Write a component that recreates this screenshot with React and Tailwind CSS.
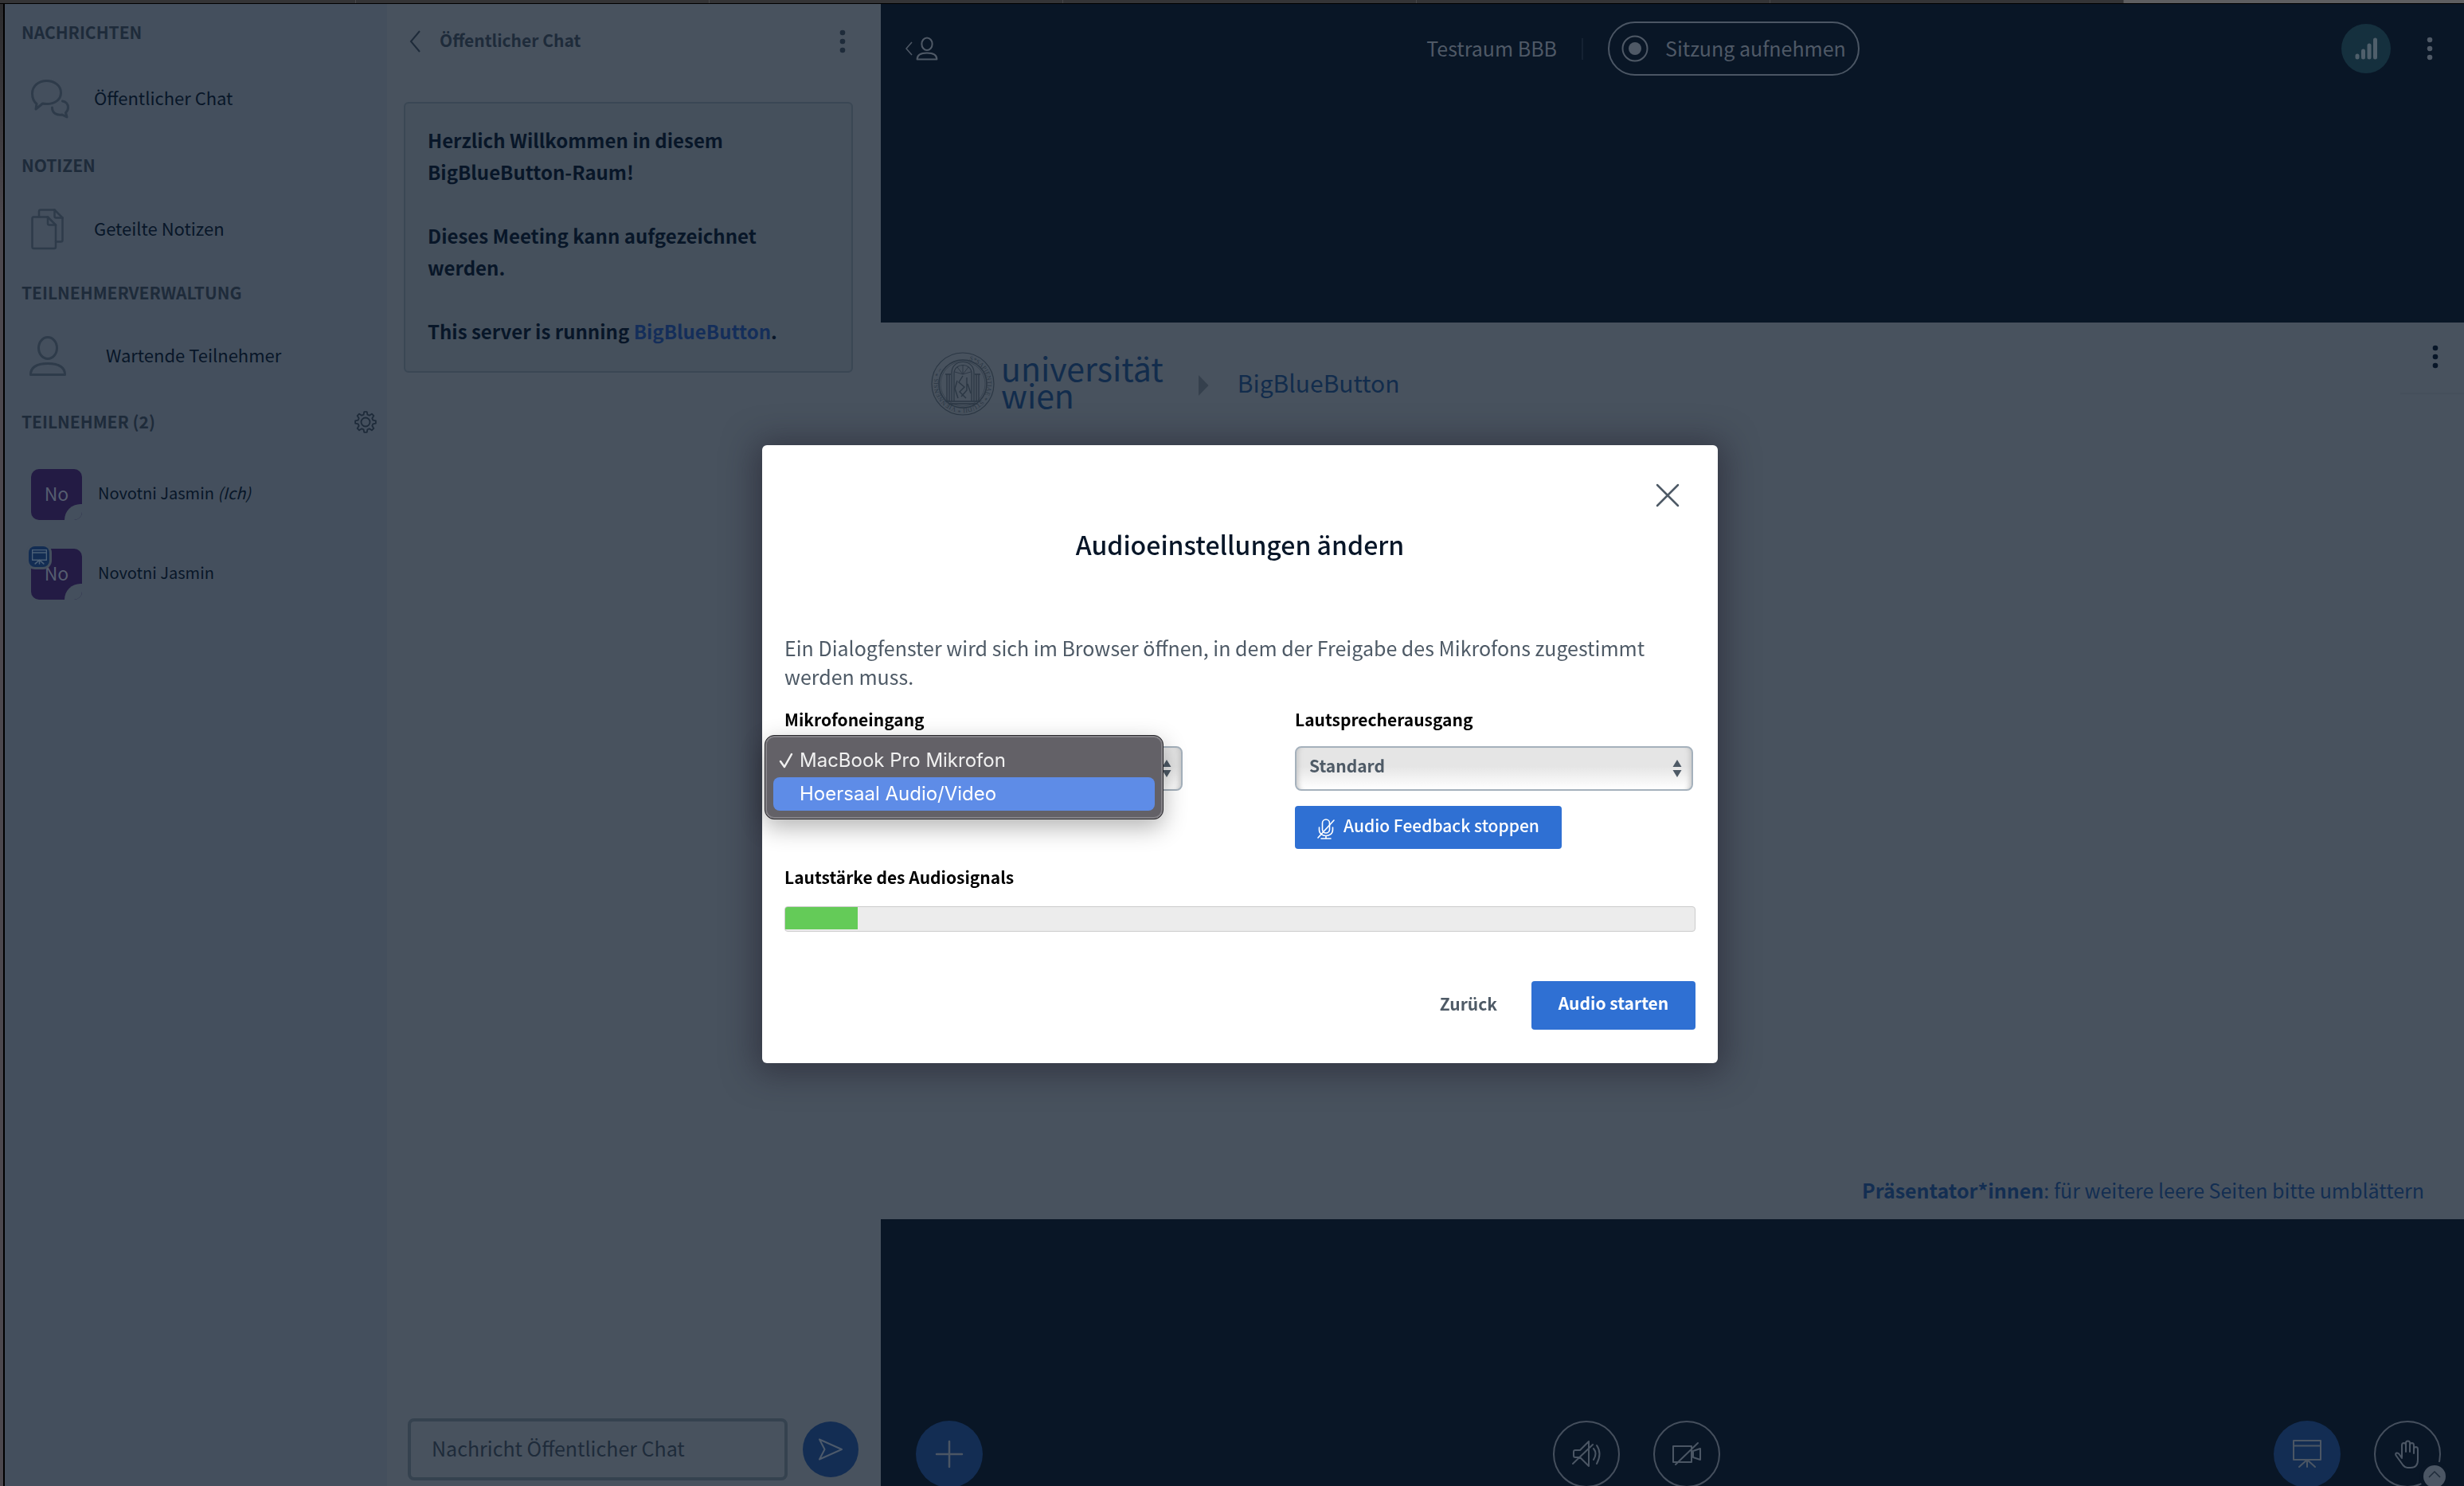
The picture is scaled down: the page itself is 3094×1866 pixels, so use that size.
import { useState } from "react";

const Chats = () => (
  <svg className="w-[52px] h-[52px]" viewBox="0 0 52 52" fill="none" stroke="currentColor" strokeWidth="3" strokeLinejoin="round" strokeLinecap="round">
    <path d="M8 32.500C4.500 29.500 2.500 25 2.500 19.500C2.500 10 10.500 3.500 20.500 3.500S38.500 9.500 38.500 18.500S30.500 32.500 20.500 32.500C18.500 32.500 17 32.500 15.500 32L7 39Z" />
    <path d="M40.500 29C45 29.500 47.500 33 47.500 37C47.500 39.500 46.500 41.500 44.500 43.500L46 49L40 46C33 47 27.500 44 27.500 37" />
  </svg>
);

const Notes = () => (
  <svg className="w-[44px] h-[52px]" viewBox="0 0 44 52" fill="none" stroke="currentColor" strokeWidth="2.5" strokeLinejoin="round" strokeLinecap="round">
    <path d="M3.500 10.500H22L32 20.500V48Q32 50 30 50H4.500Q2.500 50 2.500 48V12.500Q2.500 10.500 4.500 10.500" />
    <path d="M22 10.500V18.500Q22 20.500 24 20.500H32" />
    <path d="M11 10V3.500Q11 1.500 13 1.500H30.500L40.500 11.500V39.500Q40.500 41.500 38.500 41.500H32" />
    <path d="M30.500 1.500V9.500Q30.500 11.500 32.500 11.500H40.500" />
  </svg>
);

const Person = ({ className, strokeWidth = 3 }) => (
  <svg className={className} viewBox="0 0 50 52" fill="none" stroke="currentColor" strokeWidth={strokeWidth} strokeLinejoin="round">
    <ellipse cx="25" cy="16" rx="11.500" ry="13.500" />
    <path d="M3.500 49.500C3.500 40 11 35.500 25 35.500S46.500 40 46.500 49.500Z" />
  </svg>
);

const gearPath = () => {
  const points = [];
  for (let i = 0; i < 32; i++) {
    const step = i % 4;
    const r = step === 0 || step === 1 ? 13 : 9.6;
    const a = (Math.PI / 4) * (Math.floor(i / 4) + [-0.17, 0.17, 0.33, 0.67][step]) - Math.PI / 2;
    points.push([15 + r * Math.cos(a), 15 + r * Math.sin(a)]);
  }
  return "M" + points.map((p) => p.map((n) => n.toFixed(2)).join(" ")).join("L") + "Z";
};

const Gear = () => (
  <svg className="w-[30px] h-[30px]" viewBox="0 0 30 30" fill="none" stroke="currentColor" strokeWidth="1.8" strokeLinejoin="round">
    <path d={gearPath()} />
    <circle cx="15" cy="15" r="5.500" />
  </svg>
);

const Dots = () => (
  <svg className="w-[10px] h-[30px]" viewBox="0 0 10 30" fill="currentColor">
    <circle cx="5" cy="4" r="3.300" />
    <circle cx="5" cy="15" r="3.300" />
    <circle cx="5" cy="26" r="3.300" />
  </svg>
);

const Screen = ({ className, strokeWidth = 2 }) => (
  <svg className={className} viewBox="0 0 36 36" fill="none" stroke="currentColor" strokeWidth={strokeWidth} strokeLinecap="round" strokeLinejoin="round">
    <path d="M1 1H35V25H1ZM1 7.500H35M18 25V34M18 25L8 34M18 25L28 34" />
  </svg>
);

const Seal = () => (
  <svg className="w-[80px] h-[80px]" viewBox="0 0 80 80" fill="none" stroke="#2b3744">
    <defs>
      <path id="ring" d="M40 9a31 31 0 1 1 -0.010 0" />
    </defs>
    <circle cx="40" cy="40" r="39" strokeWidth="1.200" />
    <circle cx="40" cy="40" r="30" strokeWidth="1.500" />
    <circle cx="40" cy="40" r="28" strokeWidth="0.600" />
    <text fill="#2b3744" stroke="none" fontSize="8" className="font-['Liberation_Serif',serif]">
      <textPath href="#ring" startOffset="8">S*SAPIENTIAE * STUDII * VIENNENSIS * ~</textPath>
    </text>
    <path d="M26 62V26C26 8 54 8 54 26V62M29 62V27C29 13 51 13 51 27V62" strokeWidth="1.200" />
    <path d="M20 62V28M23 62V28M57 62V28M60 62V28M18 28H25M55 28H62M18 62H62M22 65H58" strokeWidth="1.300" />
    <path d="M40 28V17M40 28L33 19M40 28L47 19M40 28L30 25M40 28L50 25" strokeWidth="0.900" />
    <path d="M40 30L35 38L42 44L36 50L44 58M45 32V48L38 56M33 36L30 46L34 58M46 40L50 52" strokeWidth="1.400" />
  </svg>
);

const Heading = ({ children }) => (
  <h2 className="h-[30px] leading-[28px] text-[21px] font-bold text-[#1e2b3a]">{children}</h2>
);

const Avatar = ({ presenter }) => (
  <div className="relative w-[64px] h-[64px]">
    <div className="relative w-full h-full rounded-[10px] overflow-hidden bg-[#231b44] flex items-center justify-center text-[23px] leading-[28px] text-[#565e70]">
      <span className="pb-1">No</span>
      <span className="absolute -right-[18px] -bottom-5 w-10 h-10 rounded-full bg-[#444f5d]" />
    </div>
    {presenter && (
      <div className="absolute -left-[3px] -top-[3px] w-[26px] h-[26px] rounded-lg bg-[#132d53] ring-3 ring-[#444f5d] flex items-center justify-center text-[#4c6077]">
        <Screen className="w-[19px] h-[19px]" strokeWidth={3} />
      </div>
    )}
  </div>
);

const UserList = () => (
  <nav className="w-[480px] shrink-0 bg-[#444f5d] pt-[21px] pl-[21px] text-[22px] text-[#081628]">
    <Heading>NACHRICHTEN</Heading>
    <button className="flex items-center h-[80px] mt-7 mb-[29px] pl-[11px] w-full">
      <span className="w-[80px] text-[#2e3b4a]"><Chats /></span>
      <span className="leading-[32px] pb-1">Öffentlicher Chat</span>
    </button>
    <Heading>NOTIZEN</Heading>
    <button className="flex items-center h-[80px] mt-[25px] mb-[25px] pl-[11px] w-full">
      <span className="w-[80px] text-[#2e3b4a]"><Notes /></span>
      <span className="leading-[32px] pb-1">Geteilte Notizen</span>
    </button>
    <Heading>TEILNEHMERVERWALTUNG</Heading>
    <button className="flex items-center h-[80px] mt-6 mb-7 pl-2 w-full">
      <span className="w-[98px] text-[#2e3b4a]"><Person className="w-[50px] h-[52px]" /></span>
      <span className="leading-[32px] pb-1">Wartende Teilnehmer</span>
    </button>
    <div className="flex items-center justify-between pr-3">
      <Heading>TEILNEHMER (2)</Heading>
      <button aria-label="Teilnehmer verwalten" className="text-[#1e2b3a]"><Gear /></button>
    </div>
    <ul className="pt-[26px] text-[20px]">
      <li className="flex items-center gap-5 h-[100px] pl-[12px]">
        <Avatar />
        <span className="leading-[30px] pb-1">Novotni Jasmin <i>(Ich)</i></span>
      </li>
      <li className="flex items-center gap-5 h-[100px] pl-[12px]">
        <Avatar presenter />
        <span className="leading-[30px] pb-1">Novotni Jasmin</span>
      </li>
    </ul>
  </nav>
);

const ChatPanel = () => {
  const [message, setMessage] = useState("");

  return (
    <section className="w-[620px] shrink-0 bg-[#48525e] flex flex-col text-[#1e2b3a]">
      <header className="flex items-center justify-between pl-[28px] pr-[43px] h-[94px]">
        <button className="flex items-center gap-6 text-[21px] font-bold">
          <svg className="w-[14px] h-[28px]" viewBox="0 0 14 28" fill="none" stroke="currentColor" strokeWidth="2">
            <path d="M13 1L2 14L13 27" />
          </svg>
          <span className="leading-[32px] pb-1">Öffentlicher Chat</span>
        </button>
        <button aria-label="Chat-Optionen"><Dots /></button>
      </header>
      <div className="mt-[29px] ml-[21px] mr-[35px] border-2 border-[#3a4754] rounded-md bg-[#45505c] px-[28px] pt-[26px] pb-[30px] text-[24px] leading-[40px] font-bold text-[#081628]">
        <p>Herzlich Willkommen in diesem BigBlueButton-Raum!</p>
        <br />
        <p>Dieses Meeting kann aufgezeichnet werden.</p>
        <br />
        <p>This server is running <a href="#bbb" className="text-[#142e5a]">BigBlueButton</a>.</p>
      </div>
      <form className="mt-auto mb-[7px] ml-[26px] mr-7 flex items-center gap-[19px]" onSubmit={(e) => e.preventDefault()}>
        <input
          type="text"
          aria-label="Nachricht"
          placeholder="Nachricht Öffentlicher Chat"
          value={message}
          onChange={(e) => setMessage(e.target.value)}
          className="flex-1 min-w-0 h-[78px] border-4 border-[#35424f] rounded-lg px-[26px] pb-1 text-[25px] placeholder:text-[#1e2b3a] focus:outline-none"
        />
        <button aria-label="Senden" className="w-[70px] h-[70px] rounded-full bg-[#132d53] text-[#4d5a6b] flex items-center justify-center">
          <svg className="w-[32px] h-[28px]" viewBox="0 0 32 28" fill="none" stroke="currentColor" strokeWidth="2" strokeLinejoin="round">
            <path d="M2 1.500L30 14L2 26.500L8.500 14Z" />
          </svg>
        </button>
      </form>
    </section>
  );
};

const roundButton = "w-[84px] h-[84px] rounded-full flex items-center justify-center";

const Actions = () => (
  <footer className="h-[337px] -mb-0.5 shrink-0 flex items-end justify-between pl-[44px] pr-[29px] text-[#4b5664]">
    <button aria-label="Aktionen" className={roundButton + " bg-[#132d53]"}>
      <svg className="w-[36px] h-[36px]" viewBox="0 0 36 36" stroke="currentColor" strokeWidth="2.500" strokeLinecap="round">
        <path d="M18 2V34M2 18H34" />
      </svg>
    </button>
    <div className="flex gap-[42px] pl-5">
      <button aria-label="Audio" className={roundButton + " border-2 border-[#454f5d]"}>
        <svg className="w-[36px] h-[36px]" viewBox="0 0 36 36" fill="none" stroke="currentColor" strokeWidth="2" strokeLinecap="round" strokeLinejoin="round">
          <path d="M21 2V33L10 22H4Q2 22 2 20V15Q2 13 4 13H10ZM1 30L26 6M27 11Q32 17 27 25M31 7Q38 17 31 30" />
        </svg>
      </button>
      <button aria-label="Webcam" className={roundButton + " border-2 border-[#454f5d]"}>
        <svg className="w-[36px] h-[36px]" viewBox="0 0 36 36" fill="none" stroke="currentColor" strokeWidth="2" strokeLinecap="round" strokeLinejoin="round">
          <path d="M1 8H24V28H1ZM26 14L35 11V25L26 22ZM4 31L32 4" />
        </svg>
      </button>
    </div>
    <div className="flex gap-[42px]">
      <button aria-label="Präsentation" className={roundButton + " bg-[#132d53]"}>
        <Screen className="w-[36px] h-[36px]" />
      </button>
      <div className="relative">
        <button aria-label="Hand heben" className={roundButton + " border-2 border-[#454f5d]"}>
          <svg className="w-[36px] h-[36px]" viewBox="0 0 36 36" fill="none" stroke="currentColor" strokeWidth="2" strokeLinecap="round" strokeLinejoin="round">
            <path d="M11 22V7Q11 4 13.500 4T16 7V15V4Q16 1.500 18.500 1.500T21 4V15V7Q21 4 23.500 4T26 7V17V12Q26 9 28.500 9T31 12V25Q31 35 22 35H18Q15 35 12.500 32L3.500 19.500Q2.500 17 4.500 16.500T8 18.500L11 23" />
          </svg>
        </button>
        <button aria-label="Reaktionen" className="absolute -right-1.5 bottom-0 w-7 h-7 rounded-full bg-[#4b5664] ring-5 ring-[#091626] text-[#1e2b3a] flex items-center justify-center">
          <svg className="w-4 h-4" viewBox="0 0 16 16" fill="none" stroke="currentColor" strokeWidth="1.500">
            <path d="M1 9L8 2L15 9" />
          </svg>
        </button>
      </div>
    </div>
  </footer>
);

const Stage = () => (
  <main className="flex-1 min-w-0 flex flex-col bg-[#091626]">
    <header className="h-[400px] shrink-0 grid grid-cols-[1fr_auto_1fr] items-start pt-[22px] pl-[30px] pr-[38px] text-[25px] text-[#4f5966]">
      <button aria-label="Teilnehmerliste" className="h-[68px] flex items-center gap-[3px]">
        <svg className="w-[10px] h-[18px]" viewBox="0 0 10 18" fill="none" stroke="currentColor" strokeWidth="1.500">
          <path d="M9 1L2 9L9 17" />
        </svg>
        <Person className="w-[30px] h-[30px]" strokeWidth={3.5} />
      </button>
      <div className="flex items-center gap-[31px] pr-[66px]">
        <h1 className="leading-[36px] pb-0.5">Testraum BBB</h1>
        <span className="w-0.5 h-[27px] bg-[#152233]" />
        <button className="h-[68px] border-2 border-[#4b5664] rounded-full flex items-center gap-[21px] px-[15px]">
          <svg className="w-[34px] h-[34px]" viewBox="0 0 34 34" fill="none" stroke="currentColor" strokeWidth="2">
            <circle cx="17" cy="17" r="15.500" />
            <circle cx="17" cy="17" r="8" fill="currentColor" stroke="none" />
          </svg>
          <span className="leading-[36px] pb-0.5">Sitzung aufnehmen</span>
        </button>
      </div>
      <div className="h-[68px] flex items-center justify-end gap-[44px]">
        <button aria-label="Verbindungsstatus" className="w-[62px] h-[62px] rounded-full bg-[#15303e] flex items-center justify-center">
          <svg className="w-[30px] h-[30px]" viewBox="0 0 30 30" stroke="#4f5f6b" strokeWidth="5" strokeLinecap="round">
            <path d="M4 24V26M11.500 18V26M19 11V26M26.500 4V26" />
          </svg>
        </button>
        <button aria-label="Optionen"><Dots /></button>
      </div>
    </header>

    <section className="flex-1 bg-[#48525e] flex flex-col justify-between">
      <div className="flex items-start">
        <div className="flex items-center pl-[63px] pt-[37px]">
          <Seal />
          <div className="pl-[8px] pb-2 text-[41px] leading-[34px] text-[#122c4c]">
            universität<br />wien
          </div>
          <svg className="w-[13px] h-[26px] ml-[44px] mt-1" viewBox="0 0 13 26" fill="#35404d">
            <path d="M0 0L12.500 13L0 26Z" />
          </svg>
          <span className="pl-[36px] pb-1 text-[30px] leading-[44px] text-[#122c4c]">BigBlueButton</span>
        </div>
        <div className="ml-auto w-[80px] h-[90px] pt-[28px] pl-[39px] border-b-2 border-[#454f5b]">
          <button aria-label="Präsentationsoptionen" className="text-[#081628]"><Dots /></button>
        </div>
      </div>
      <p className="text-right pr-[50px] pb-[17px] text-[25px] leading-[40px] text-[#132e52]">
        <b>Präsentator*innen</b>: für weitere leere Seiten bitte umblättern
      </p>
    </section>

    <Actions />
  </main>
);

const DeviceSelect = ({ id, label, options, children }) => (
  <div className="w-[500px]">
    <label htmlFor={id} className="block leading-[30px] text-black">{label}</label>
    <div className="relative mt-[19px]">
      <select
        id={id}
        className="block w-full h-[56px] appearance-none border-2 border-[#a5b1bc] rounded-lg bg-[linear-gradient(#e5e5e5_45%,#ffffff)] pl-4 pb-1.5 text-[#4e5a66] shadow-[inset_8px_0_6px_-6px_#c4c4c4,inset_-8px_0_6px_-6px_#c4c4c4]"
      >
        {options.map((option) => (
          <option key={option}>{option}</option>
        ))}
      </select>
      <svg className="absolute right-[14px] top-[17px] w-[12px] h-[22px] pointer-events-none" viewBox="0 0 12 22" fill="#4e5a66">
        <path d="M6 0L11.500 9H0.500ZM0.500 13H11.500L6 22Z" />
      </svg>
      {children}
    </div>
  </div>
);

const AudioModal = () => {
  const inputs = ["MacBook Pro Mikrofon", "Hoersaal Audio/Video"];
  const level = 8;

  return (
    <div className="fixed inset-0 flex items-center justify-center pl-5 pt-7">
      <div role="dialog" aria-labelledby="audio-title" className="w-[1200px] bg-white rounded-md shadow-[0_4px_40px_8px_rgba(30,25,40,0.5)] px-[28px] pt-[46px] pb-[42px] text-[21px] font-bold">
        <div className="flex justify-end pr-[18px]">
          <button aria-label="Schließen" className="text-[#4e5a66]">
            <svg className="w-[34px] h-[34px]" viewBox="0 0 34 34" stroke="currentColor" strokeWidth="2.500" strokeLinecap="round">
              <path d="M4 4L30 30M30 4L4 30" />
            </svg>
          </button>
        </div>
        <h2 id="audio-title" className="mt-[20px] text-center text-[32px] leading-[48px] font-medium text-[#081628]">Audioeinstellungen ändern</h2>
        <p className="mt-[88px] text-[25px] leading-[36px] font-normal text-[#4e5a66]">
          Ein Dialogfenster wird sich im Browser öffnen, in dem der Freigabe des Mikrofons zugestimmt werden muss.
        </p>
        <div className="mt-[21px] grid grid-cols-2 gap-x-[138px]">
          <DeviceSelect id="mic" label="Mikrofoneingang" options={inputs}>
            <ul role="listbox" aria-label="Mikrofoneingang" className="absolute -left-[25px] -top-[14px] w-[501px] h-[106px] rounded-xl bg-[#636167] border border-[#262529] inset-ring-2 inset-ring-[#858388] shadow-[0_10px_30px_rgba(0,0,0,0.3)] p-[10px] font-['Inter',sans-serif] text-[24px] leading-[42px] font-normal text-[#f0f0f0]">
              <li role="option" aria-selected="true" className="flex items-center h-[42px] pl-[7px]">
                <svg className="w-[18px] h-[22px] mr-2" viewBox="0 0 18 22" fill="none" stroke="currentColor" strokeWidth="2.500" strokeLinecap="round" strokeLinejoin="round">
                  <path d="M2 12L7 19L16 3" />
                </svg>
                {inputs[0]}
              </li>
              <li role="option" aria-selected="false" className="h-[42px] pl-[33px] rounded-lg bg-[#5e8ce7] text-white">{inputs[1]}</li>
            </ul>
          </DeviceSelect>
          <div>
            <DeviceSelect id="speaker" label="Lautsprecherausgang" options={["Standard"]} />
            <button className="mt-[19px] h-[54px] px-[28px] rounded bg-[#2f70d3] text-white font-medium flex items-center gap-[11px]">
              <svg className="w-[22px] h-[26px] mt-1" viewBox="0 0 22 26" fill="none" stroke="currentColor" strokeWidth="1.600" strokeLinecap="round">
                <rect x="6.500" y="1" width="9" height="17" rx="4.500" />
                <path d="M2.500 11V14C2.500 24 19.500 24 19.500 14V11M11 21.500V25M5 25H17M1 24L21 2" />
              </svg>
              <span className="leading-[32px] pb-1.5">Audio Feedback stoppen</span>
            </button>
          </div>
        </div>
        <div className="mt-[20px] leading-[30px] text-black">Lautstärke des Audiosignals</div>
        <div role="meter" aria-label="Lautstärke des Audiosignals" aria-valuenow={level} className="mt-[22px] h-[32px] border border-[#cccccc] rounded bg-[#ececec] overflow-hidden">
          <div className="h-[28px] bg-[#64cb58]" style={{ width: `${level}%` }} />
        </div>
        <div className="mt-[62px] flex justify-end items-center gap-[43px]">
          <button className="leading-[32px] pb-1.5 text-[#4e5a66]">Zurück</button>
          <button className="w-[206px] h-[61px] pb-1.5 rounded bg-[#2f70d3] text-white">Audio starten</button>
        </div>
      </div>
    </div>
  );
};

const App = () => {
  return (
    <div className="h-screen overflow-hidden flex flex-col bg-black font-['Noto_Sans_CJK_SC','Noto_Sans_CJK_JP',sans-serif]">
      {/* browser tab strip edge */}
      <div className="flex h-1 mb-px shrink-0 bg-[#343436]">
        <span className="w-[447px] border-r border-[#48484a]" />
        <span className="w-[444px] border-r border-[#48484a]" />
        <span className="w-[444px] border-r border-[#48484a]" />
        <span className="w-[444px] border-r border-[#48484a]" />
        <span className="w-[444px] border-r border-[#48484a]" />
        <span className="w-[444px] border-r border-[#48484a]" />
        <span className="flex-1 bg-[#5e5e60]" />
      </div>
      <div className="flex-1 min-h-0 flex">
        <div className="w-1 mr-0.5 shrink-0 bg-linear-to-b from-[#2c2c2e] to-[#4c484e] to-15%" />
        <UserList />
        <ChatPanel />
        <Stage />
      </div>
      <AudioModal />
    </div>
  );
};

export default App;
